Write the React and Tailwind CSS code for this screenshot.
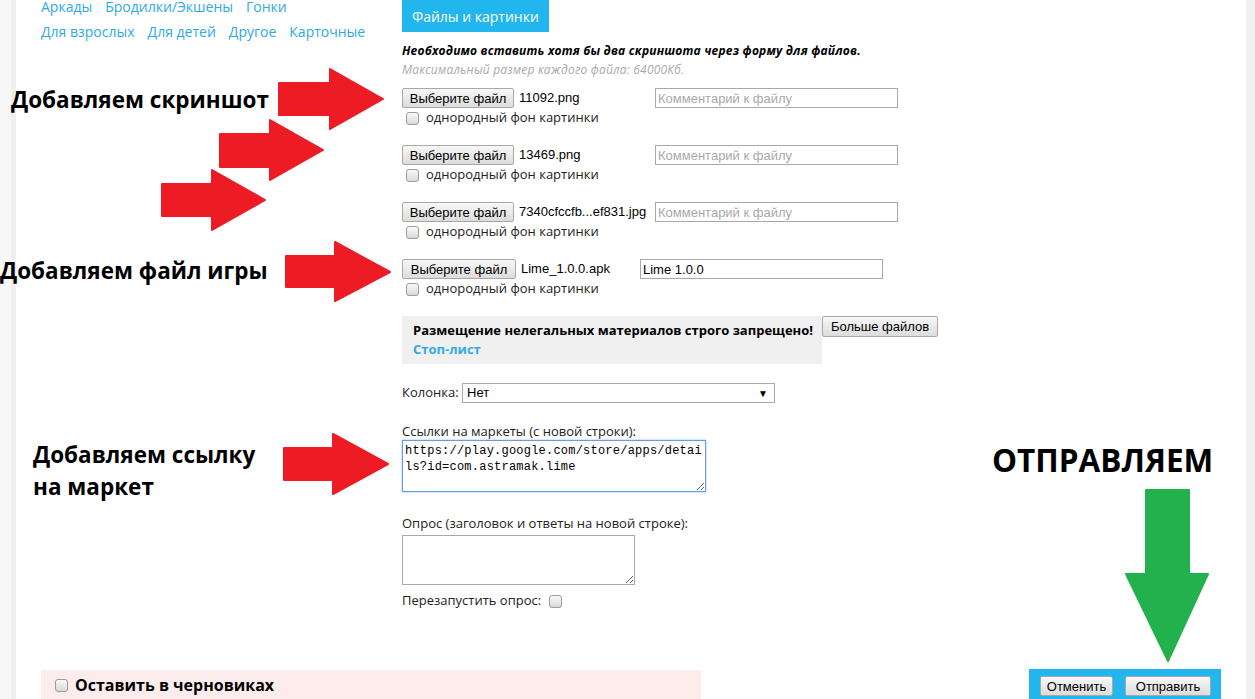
import React from "react";

const Cb = () => (
  <input
    type="checkbox"
    readOnly
    className="appearance-none m-0 block w-[13px] h-[13px] rounded-[3px] border border-[#9c9c9c] bg-linear-to-b from-[#fafafa] to-[#d9d9d9]"
  />
);

const Btn = ({ children, cls }) => (
  <button
    className={
      "h-[20px] border border-[#a8a8a8] rounded-[2px] bg-linear-to-b from-[#f8f8f8] to-[#dcdcdc] text-[13px] text-black font-['Liberation_Sans',Arial,sans-serif] leading-none p-0 " +
      cls
    }
  >
    {children}
  </button>
);

const FileRow = ({ name, nameW, value, btnW }) => (
  <div className="flex flex-col pb-[18px]">
    <div className="flex items-center h-[20px]">
      <Btn cls={btnW}>Выберите файл</Btn>
      <span className={"pl-[5px] text-[13px] text-black font-['Liberation_Sans',Arial,sans-serif] whitespace-nowrap " + nameW}>
        {name}
      </span>
      <input
        readOnly
        placeholder="Комментарий к файлу"
        defaultValue={value}
        className="w-[243px] h-[20px] border border-[#a9a9a9] px-[2px] text-[13px] text-black placeholder:text-[#a9a9a9] font-['Liberation_Sans',Arial,sans-serif] outline-none"
      />
    </div>
    <div className="flex items-center h-[18px] mt-[1px] pl-[4px] gap-[7px]">
      <Cb />
      <span className="text-[13px] text-[#222]">однородный фон картинки</span>
    </div>
  </div>
);

export default function App() {
  const links1 = ["Аркады", "Бродилки/Экшены", "Гонки"];
  const links2 = ["Для взрослых", "Для детей", "Другое", "Карточные"];
  return (
    <div className="relative flex w-[1255px] h-[699px] overflow-hidden font-['Open_Sans',sans-serif] text-[#222]">
      <div className="w-[11px] bg-[#f7f7f7]" />
      <div className="w-[5px] bg-[#efefef]" />
      <div className="flex-1 bg-white flex flex-col">
        <div className="flex">
          {/* sidebar */}
          <div className="w-[386px] pl-[25px]">
            <div className="-mt-[6px] w-[330px] flex flex-col text-[14px] leading-[26px] text-[#2eaae6]">
              <div className="flex gap-x-[13px]">
                {links1.map((l) => (
                  <span key={l}>{l}</span>
                ))}
              </div>
              <div className="-mt-[1px] flex gap-x-[13px]">
                {links2.map((l) => (
                  <span key={l}>{l}</span>
                ))}
              </div>
            </div>
          </div>
          {/* form */}
          <div className="flex flex-col">
            <div className="self-start h-[32px] px-[10px] flex items-center bg-[#22b6ef] text-white text-[14px]">
              Файлы и картинки
            </div>
            <div className="mt-[9px] text-[12px] leading-[19px] italic tracking-[0.2px] whitespace-nowrap">
              <div className="font-bold text-black">
                Необходимо вставить хотя бы два скриншота через форму для файлов.
              </div>
              <div className="text-[#aaaaaa]">Максимальный размер каждого файла: 64000Кб.</div>
            </div>
            <div className="mt-[9px] flex flex-col">
              <FileRow name="11092.png" nameW="w-[141px]" btnW="w-[112px]" />
              <FileRow name="13469.png" nameW="w-[141px]" btnW="w-[112px]" />
              <FileRow name="7340cfccfb...ef831.jpg" nameW="w-[141px]" btnW="w-[112px]" />
              <FileRow name="Lime_1.0.0.apk" nameW="w-[124px]" value="Lime 1.0.0" btnW="w-[114px]" />
            </div>
            <div className="flex items-start">
              <div className="w-[420px] h-[48px] bg-[#f0f0f0] px-[11px] pt-[5px] text-[13px] leading-[19px] font-bold whitespace-nowrap overflow-hidden">
                <div className="text-black">Размещение нелегальных материалов строго запрещено!</div>
                <div className="text-[#35a9e6]">Стоп-лист</div>
              </div>
              <Btn cls="w-[116px] h-[21px]">Больше файлов</Btn>
            </div>
            <div className="mt-[19px] flex items-center h-[20px]">
              <span className="text-[13px] w-[60px]">Колонка:</span>
              <div className="w-[313px] h-[20px] border border-[#a9a9a9] flex items-center justify-between pl-[4px] pr-[6px] text-[13px] text-black font-['Liberation_Sans',Arial,sans-serif]">
                <span>Нет</span>
                <span className="text-[10px]">▼</span>
              </div>
            </div>
            <div className="mt-[19px] text-[13px] leading-[18px]">Ссылки на маркеты (с новой строки):</div>
            <textarea
              readOnly
              defaultValue="https://play.google.com/store/apps/details?id=com.astramak.lime"
              className="block w-[304px] h-[52px] border border-[#6a9be0] shadow-[0_0_2px_#8fb8f0] px-[2px] py-[2px] text-[12px] leading-[16px] tracking-[0.22px] break-all text-black font-['Liberation_Mono',monospace] outline-none"
            />
            <div className="mt-[23px] text-[13px] leading-[17px]">Опрос (заголовок и ответы на новой строке):</div>
            <textarea
              readOnly
              className="block mt-[3px] w-[233px] h-[50px] border border-[#a9a9a9] outline-none"
            />
            <div className="mt-[7px] h-[18px] flex items-center gap-[8px]">
              <span className="text-[13px]">Перезапустить опрос:</span>
              <Cb />
            </div>
          </div>
        </div>
        {/* bottom */}
        <div className="mt-[59px] flex items-start pl-[25px]">
          <div className="mt-[1px] w-[660px] h-[30px] bg-[#fdecec] flex items-center pl-[14px] gap-[7px]">
            <Cb />
            <span className="text-[16px] font-bold text-black">Оставить в черновиках</span>
          </div>
          <div className="ml-[328px] w-[192px] h-[31px] bg-[#22b6ef] flex items-start pt-[7px] pl-[11px] gap-[12px]">
            <Btn cls="w-[73px]">Отменить</Btn>
            <Btn cls="w-[86px]">Отправить</Btn>
          </div>
        </div>
      </div>
      <div className="w-[9px] bg-[#f0f0f0]" />

      {/* annotations overlay */}
      <div className="absolute left-[11px] top-[86px] text-[22.5px] font-bold text-black leading-[28px] whitespace-nowrap">
        Добавляем скриншот
      </div>
      <div className="absolute left-[0px] top-[257px] text-[22.5px] font-bold text-black leading-[28px] whitespace-nowrap">
        Добавляем файл игры
      </div>
      <div className="absolute left-[33px] top-[439px] text-[22.5px] font-bold text-black leading-[32px] whitespace-nowrap">
        Добавляем ссылку
        <br />
        на маркет
      </div>
      <div className="absolute left-[992px] top-[440px] text-[31.5px] font-bold text-black leading-[40px] whitespace-nowrap">
        ОТПРАВЛЯЕМ
      </div>
      <svg className="absolute left-0 top-0 pointer-events-none" width="1255" height="699" viewBox="0 0 1255 699">
        <g fill="#ed1c24" stroke="#ed1c24" strokeWidth="2" strokeLinejoin="round">
          <polygon points="279,83 330,83 330,69 383,99 330,129 330,115 279,115" />
          <polygon points="220,134 270,134 270,120 323,150 270,180 270,167 220,167" />
          <polygon points="162,184 212,184 212,170 265,200 212,230 212,216 162,216" />
          <polygon points="286,256 335,256 335,242 390,272 335,301 335,287 286,287" />
          <polygon points="284,448 333,448 333,434 388,464 333,494 333,480 284,480" />
        </g>
        <polygon
          points="1146,490 1189,490 1189,574 1208,574 1168,661 1126,574 1146,574"
          fill="#22b14c"
          stroke="#22b14c"
          strokeWidth="2"
          strokeLinejoin="round"
        />
      </svg>
    </div>
  );
}
